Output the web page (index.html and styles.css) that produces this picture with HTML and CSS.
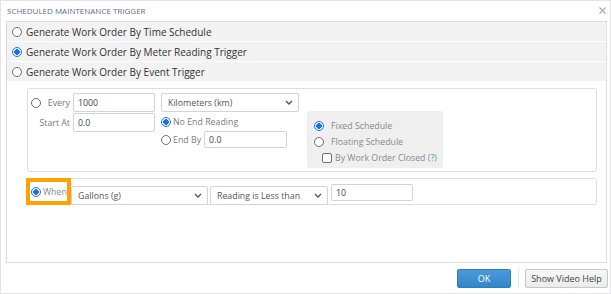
FILE: index.html
```html
<!DOCTYPE html>
<html>
<head>
<meta charset="utf-8">
<link rel="stylesheet" href="styles.css">
</head>
<body>
<div class="dialog">
  <div class="titlebar">
    <span class="title">SCHEDULED MAINTENANCE TRIGGER</span>
    <svg class="close" width="7" height="7" viewBox="0 0 7 7"><path d="M0.5 0.5L6.5 6.5M6.5 0.5L0.5 6.5" stroke="#a8a8a8" stroke-width="1.1"/></svg>
  </div>
  <div class="frame">
    <div class="opt"><span class="radio"></span><span>Generate Work Order By Time Schedule</span></div>
    <div class="opt"><span class="radio on"></span><span>Generate Work Order By Meter Reading Trigger</span></div>
    <div class="opt"><span class="radio"></span><span>Generate Work Order By Event Trigger</span></div>

    <div class="panel meter">
      <div class="col-left">
        <div class="lrow">
          <span class="labcell"><span class="radio"></span><span class="lbl">Every</span></span>
          <span class="input w82">1000</span>
        </div>
        <div class="lrow">
          <span class="labcell"><span class="lbl">Start At</span></span>
          <span class="input w82">0.0</span>
        </div>
      </div>
      <div class="col-mid">
        <div class="select w138"><span>Kilometers (km)</span><svg width="8" height="5" viewBox="0 0 8 5"><path d="M1 1l3 3 3-3" fill="none" stroke="#555" stroke-width="1.4"/></svg></div>
        <div class="mrow r1"><span class="radio on"></span><span class="lbl">No End Reading</span></div>
        <div class="mrow r2"><span class="radio"></span><span class="lbl">End By</span><span class="input endby">0.0</span></div>
      </div>
      <div class="schedbox">
        <div class="srow"><span class="radio on"></span><span class="slbl">Fixed Schedule</span></div>
        <div class="srow"><span class="radio"></span><span class="slbl">Floating Schedule</span></div>
        <div class="srow chk"><span class="checkbox"></span><span class="slbl">By Work Order Closed (<span class="q">?</span>)</span></div>
      </div>
    </div>

    <div class="panel when">
      <div class="hl"><span class="radio on"></span><span class="lbl">When</span></div>
      <div class="select gal"><span>Gallons (g)</span><svg width="8" height="5" viewBox="0 0 8 5"><path d="M1 1l3 3 3-3" fill="none" stroke="#555" stroke-width="1.4"/></svg></div>
      <div class="select cond"><span>Reading is Less than</span><svg width="8" height="5" viewBox="0 0 8 5"><path d="M1 1l3 3 3-3" fill="none" stroke="#555" stroke-width="1.4"/></svg></div>
      <span class="input val">10</span>
    </div>
  </div>
  <div class="footer">
    <button class="btn ok">OK</button>
    <span class="sep"></span>
    <button class="btn help">Show Video Help</button>
  </div>
</div>
</body>
</html>
```
FILE: styles.css
```css
* { box-sizing: border-box; }
html, body { margin: 0; padding: 0; background: #fff; }
body {
  width: 611px;
  height: 294px;
  font-family: "Open Sans", "Noto Sans", sans-serif;
  font-size: 9px;
  color: #333;
  overflow: hidden;
  white-space: nowrap;
}
.dialog {
  width: 611px;
  height: 294px;
  border: 1px solid #e4e4e8;
  display: flex;
  flex-direction: column;
}
.titlebar {
  height: 20px;
  display: flex;
  align-items: center;
  justify-content: space-between;
  padding: 0 4px 2px 6px;
}
.title {
  font-size: 8px;
  color: #5d6d86;
}
.close { margin-top: 1px; }
.frame {
  margin-left: 5px;
  width: 601px;
  height: 242px;
  border: 1px solid #dcdce2;
}
.opt {
  height: 19px;
  margin-bottom: 1px;
  background: #f2f2f2;
  display: flex;
  align-items: center;
  padding-left: 5px;
  font-size: 10px;
  color: #333;
}
.opt .radio { margin-right: 4px; }
.radio {
  display: inline-block;
  width: 10px;
  height: 10px;
  border-radius: 50%;
  border: 1px solid #6f6f6f;
  background: #fff;
  flex: none;
}
.radio.on {
  border: 1.5px solid #1b6fe4;
  background: radial-gradient(circle, #1b6fe4 0 2.6px, #fff 3px);
}
.checkbox {
  display: inline-block;
  width: 10px;
  height: 10px;
  border: 1px solid #6f6f6f;
  border-radius: 2px;
  background: #fff;
  flex: none;
}
.panel {
  margin-left: 20px;
  width: 570px;
  border: 1px solid #dedee2;
  border-radius: 3px;
}
.meter {
  margin-top: 7px;
  height: 84px;
  display: flex;
  align-items: flex-start;
  padding: 4px 0 0 3px;
}
.col-left { display: flex; flex-direction: column; gap: 1px; }
.lrow { display: flex; align-items: center; gap: 3px; }
.labcell {
  width: 39px;
  display: flex;
  align-items: center;
  justify-content: flex-end;
}
.labcell .radio { margin-right: auto; }
.lbl { color: #7a7a7a; font-size: 8.8px; }
.input {
  display: flex;
  align-items: center;
  height: 19px;
  border: 1px solid #d3d3d8;
  border-radius: 2px;
  padding-left: 4px;
  color: #444;
  font-size: 8.8px;
  background: #fff;
}
.w82 { width: 82px; }
.col-mid { margin-left: 6px; display: flex; flex-direction: column; }
.select {
  height: 19px;
  border: 1px solid #d3d3d8;
  border-radius: 2px;
  display: flex;
  align-items: center;
  justify-content: space-between;
  padding: 0 5px 0 6px;
  color: #555;
  font-size: 8.8px;
  background: #fff;
}
.w138 { width: 138px; }
.mrow { display: flex; align-items: center; }
.mrow .radio { margin-right: 2px; }
.mrow.r1 { height: 16px; margin-top: 2px; }
.mrow.r2 { height: 19px; }
.input.endby { width: 83px; height: 17px; margin-left: 3px; }
.schedbox {
  margin-left: 8px;
  margin-top: 18px;
  width: 136px;
  height: 57px;
  background: #efefef;
  border-radius: 2px;
  padding: 7px 0 0 7px;
}
.srow { display: flex; align-items: center; height: 16px; }
.srow .radio { margin-right: 7px; }
.srow.chk { padding-left: 8px; height: 15px; }
.srow.chk .checkbox { margin-right: 3px; }
.slbl { color: #8a8a8a; font-size: 8.8px; }
.q { color: #3a8fc8; }
.when {
  margin-top: 6px;
  height: 27px;
  display: flex;
  align-items: flex-start;
}
.hl {
  margin-left: -2px;
  margin-top: -1px;
  width: 45px;
  height: 27px;
  border: 4px solid #ffa200;
  background: #fff;
  display: flex;
  align-items: center;
  padding-left: 1px;
}
.hl .radio { margin-right: 2px; }
.hl .lbl { color: #888; }
.select.gal { width: 137px; margin-top: 7px; }
.select.cond { width: 118px; margin-top: 7px; margin-left: 2px; }
.input.val { width: 82px; height: 17px; margin-top: 5px; margin-left: 3px; }
.footer {
  flex: 1;
  display: flex;
  align-items: flex-start;
  justify-content: flex-end;
  padding: 6px 2px 0 0;
}
.btn {
  height: 19px;
  font-family: "Open Sans", "Noto Sans", sans-serif;
  font-size: 9px;
  border-radius: 2px;
  padding: 0;
  display: flex;
  align-items: center;
  justify-content: center;
}
.ok {
  width: 54px;
  background: linear-gradient(#4a9ad8, #3386c9);
  border: 1px solid #2f7dbf;
  color: #fff;
}
.sep {
  width: 1px;
  height: 19px;
  background: #e0e0e0;
  margin: 0 6px 0 7px;
}
.help {
  width: 83px;
  background: linear-gradient(#f8f8f8, #ebebeb);
  border: 1px solid #c6c6c6;
  color: #444;
}
```
